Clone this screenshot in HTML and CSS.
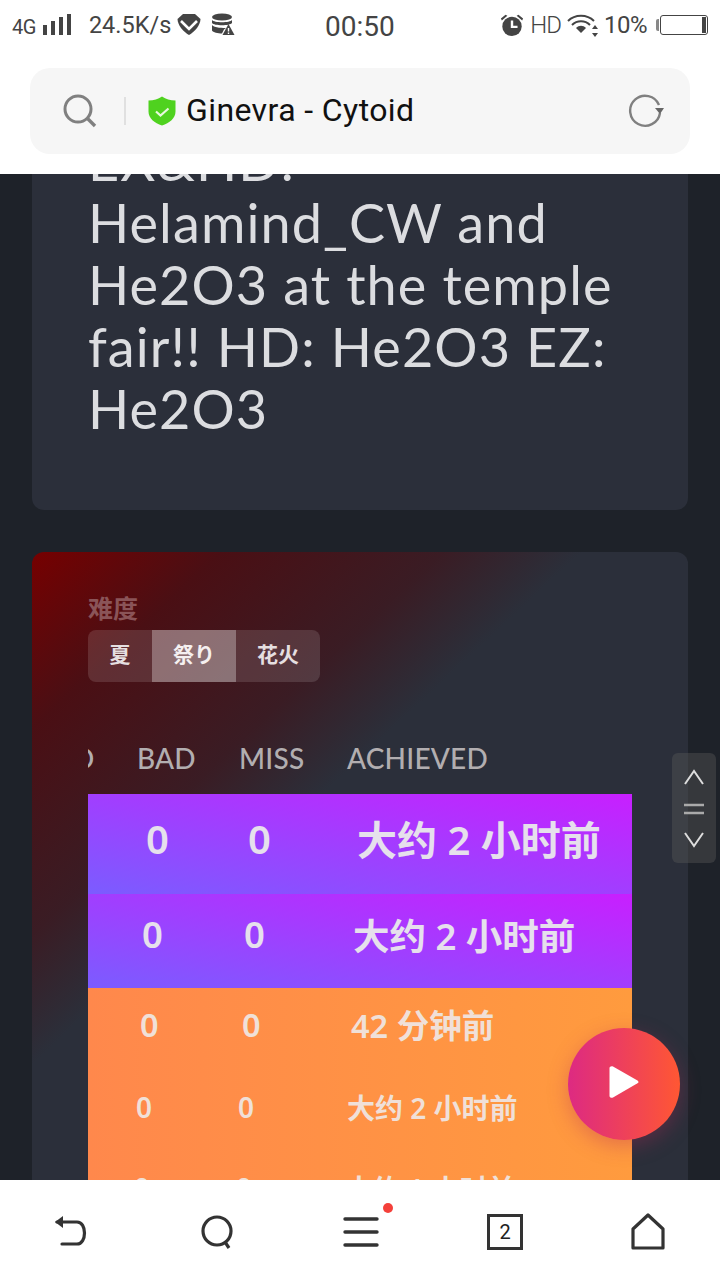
FILE: index.html
```html
<!DOCTYPE html>
<html lang="zh">
<head>
<meta charset="utf-8">
<title>Ginevra - Cytoid</title>
<link rel="stylesheet" href="styles.css">
</head>
<body>
<div class="phone">
  <header class="status">
    <div class="status-left">
      <span class="net">4G</span>
      <svg class="ic-signal" width="30" height="24" viewBox="0 0 30 24"><g fill="#444"><rect x="1" y="12" width="4" height="10"/><rect x="9" y="8" width="4" height="14"/><rect x="17" y="4" width="4" height="18"/><rect x="25" y="1" width="4" height="21"/></g></svg>
      <span class="speed">24.5K/s</span>
      <svg class="ic-vpn" width="24" height="24" viewBox="0 0 24 24"><path d="M6 1h12l5.500 5c0 6-6 13-11.500 16C6.500 19 .5 12 .5 6z" fill="#444"/><path d="M4 8l8 8 8-8" fill="none" stroke="#fff" stroke-width="2.600"/></svg>
      <svg class="ic-db" width="24" height="24" viewBox="0 0 24 24"><g fill="#444"><ellipse cx="11" cy="4" rx="10" ry="3.600"/><path d="M1 7c2 3 18 3 20 0v3c-2 3-18 3-20 0zM1 12c2 3 12 3 14 3l-2 1.500-2 4c-4 0-9-1-10-3z"/><path d="M17.500 11l6 11h-12z"/></g><path d="M17.500 15v3.500M17.500 19.500v1.500" stroke="#fff" stroke-width="1.400"/></svg>
    </div>
    <span class="clock">00:50</span>
    <div class="status-right">
      <svg class="ic-alarm" width="24" height="24" viewBox="0 0 26 26"><g fill="#444"><circle cx="13" cy="14.500" r="10.500"/><path d="M1 6l5-4 2 1-6 5zM25 6l-5-4-2 1 6 5z"/></g><path d="M13 8v7h6" fill="none" stroke="#fff" stroke-width="2.600"/></svg>
      <span class="hd">HD</span>
      <svg class="ic-wifi" width="32" height="24" viewBox="0 0 32 24"><g fill="none" stroke="#444" stroke-width="2"><path d="M1 8c7-7 19-7 26 0"/><path d="M5 12c5-5 13-5 18 0"/></g><path d="M9 15c3-3 7-3 10 0l-5 5z" fill="#444"/><path d="M28 12l3 4h-6zM28 24l3-4h-6z" fill="#444"/></svg>
      <span class="pct">10%</span>
      <span class="batt-cap"></span>
      <span class="batt"><span class="batt-level"></span></span>
    </div>
  </header>

  <div class="addr-wrap">
    <div class="addr">
      <svg class="ic-search" width="34" height="34" viewBox="0 0 34 34"><circle cx="15" cy="15" r="13" fill="none" stroke="#808080" stroke-width="3"/><path d="M24 24l8 8" stroke="#808080" stroke-width="3.400"/></svg>
      <span class="sep"></span>
      <svg class="ic-shield" width="28" height="30" viewBox="0 0 28 30"><path d="M14 .5c4 2.500 8 4 13.500 4v11c0 7-6 11.500-13.500 14C6.500 27 .5 22.500.5 15.500v-11C6 4.500 10 3 14 .5z" fill="#4fd21f"/><path d="M8 15.500l4.500 4 8-7" fill="none" stroke="#e8f9dd" stroke-width="2.200"/></svg>
      <span class="addr-title">Ginevra - Cytoid</span>
      <svg class="ic-reload" width="36" height="34" viewBox="0 0 36 34"><path d="M31 11A15 15 0 1 0 32 19" fill="none" stroke="#808080" stroke-width="2.400"/><path d="M27 14h9l-4 6z" fill="#666"/></svg>
    </div>
  </div>

  <main class="page">
    <section class="card card-desc">
      <p class="desc">EX&amp;HD:<br>Helamind_CW and<br>He2O3 at the temple<br>fair!! HD: He2O3 EZ:<br>He2O3</p>
    </section>

    <section class="card card-rank">
      <div class="label">难度</div>
      <div class="tabs">
        <span class="tab tab-a">夏</span>
        <span class="tab tab-b on">祭り</span>
        <span class="tab tab-b">花火</span>
      </div>
      <div class="thead">
        <span class="th-clip">D</span>
        <span class="th th-bad">BAD</span>
        <span class="th th-miss">MISS</span>
        <span class="th">ACHIEVED</span>
      </div>
      <div class="rows">
        <div class="row purple r1"><span class="n">0</span><span class="n n2">0</span><span class="t">大约 2 小时前</span></div>
        <div class="row purple r2"><span class="n">0</span><span class="n n2">0</span><span class="t">大约 2 小时前</span></div>
        <div class="orange">
          <div class="row r3"><span class="n">0</span><span class="n n2">0</span><span class="t">42 分钟前</span></div>
          <div class="row r4"><span class="n">0</span><span class="n n2">0</span><span class="t">大约 2 小时前</span></div>
          <div class="row r5"><span class="n">0</span><span class="n n2">0</span><span class="t">大约 1 小时前</span></div>
        </div>
      </div>
    </section>

    <div class="scroller">
      <svg width="22" height="18" viewBox="0 0 22 18"><path d="M2 16l9-13 9 13" fill="none" stroke="#ddd" stroke-width="2"/></svg>
      <svg width="22" height="14" viewBox="0 0 22 14"><path d="M1 3h20M1 11h20" stroke="#aaa" stroke-width="2.400"/></svg>
      <svg width="22" height="18" viewBox="0 0 22 18"><path d="M2 2l9 13 9-13" fill="none" stroke="#ddd" stroke-width="2"/></svg>
    </div>
    <div class="fab">
      <svg class="play" width="30" height="34" viewBox="0 0 30 34"><path d="M4 1.500l24.500 14c1.300.8 1.300 2 0 2.800L4 32.500C2.500 33.300.5 32.500.5 31V3C.5 1.500 2.500.7 4 1.500z" fill="#fff"/></svg>
    </div>
  </main>

  <nav class="nav">
    <svg width="40" height="40" viewBox="0 0 40 40"><path d="M5 10h20c10 0 10 22 0 22H10" fill="none" stroke="#333" stroke-width="3.200" stroke-linecap="round"/><path d="M3 10l8-6v12z" fill="#333"/></svg>
    <svg width="40" height="40" viewBox="0 0 40 40"><circle cx="20" cy="19" r="14" fill="none" stroke="#333" stroke-width="3.200"/><path d="M28 30l4 6" stroke="#333" stroke-width="3.200"/></svg>
    <span class="menu">
      <svg width="40" height="40" viewBox="0 0 40 40"><path d="M3 7h32M3 20h32M3 33h32" stroke="#333" stroke-width="3.400" stroke-linecap="round"/></svg>
      <span class="dot"></span>
    </span>
    <span class="tabs-count">2</span>
    <svg width="40" height="40" viewBox="0 0 40 40"><path d="M20 3L35 17v19H5V17z" fill="none" stroke="#333" stroke-width="3.200" stroke-linejoin="round"/></svg>
  </nav>
</div>
</body>
</html>
```

FILE: styles.css
```css
* { box-sizing: border-box; }
html, body { margin: 0; padding: 0; }
body { font-family: "Noto Sans", "Noto Sans CJK SC", sans-serif; background: #fff; }
.phone { width: 720px; height: 1280px; display: flex; flex-direction: column; overflow: hidden; }

/* status bar */
.status { height: 54px; flex: none; display: flex; align-items: center; justify-content: space-between; padding: 0 12px 4px 12px; color: #444; position: relative; background: #fff; }
.status-left, .status-right { display: flex; align-items: center; }
.net { font: 20px "Roboto", sans-serif; letter-spacing: -.5px; margin-top: 3px; }
.ic-signal { margin-left: 6px; margin-right: 17px; }
.speed { font: 23.500px/26px "Roboto", sans-serif; margin-right: 6px; }
.ic-vpn { margin-right: 10px; }
.clock { font: 28px "Roboto", sans-serif; position: absolute; left: 325px; top: 10px; }
.ic-alarm { margin-right: 6px; }
.hd { font: 24px "Roboto", sans-serif; font-weight: 300; letter-spacing: -1px; margin-right: 6px; }
.pct { font: 24px "Roboto", sans-serif; margin: 0 9px 0 5px; letter-spacing: -.5px; }
.batt-cap { width: 3px; height: 12px; background: #888; border-radius: 2px 0 0 2px; margin-right: 1px; }
.batt { width: 48px; height: 20px; border: 1.500px solid #444; border-radius: 3px; display: flex; justify-content: flex-end; padding: 1px; }
.batt-level { width: 4px; background: #444; }

/* address bar */
.addr-wrap { height: 120px; flex: none; background: #fff; padding: 14px 30px 20px; }
.addr { height: 86px; border-radius: 20px; background: #f6f6f6; display: flex; align-items: center; padding: 0 26px 0 33px; }
.ic-search { flex: none; }
.sep { width: 2px; height: 28px; background: #e0e0e0; margin: 0 22px 0 27px; flex: none; }
.ic-shield { flex: none; margin-right: 10px; }
.addr-title { font: 32px "Roboto", sans-serif; color: #111; flex: 1; letter-spacing: .4px; margin-bottom: 2px; }

/* page */
.page { flex: 1; min-height: 0; background: #1e2229; position: relative; overflow: hidden; padding: 0 32px; }
.card { background: #2b2f3a; border-radius: 12px; position: relative; }
.card-desc { margin-top: -70px; height: 406px; padding: 26px 56px 0; }
.desc { margin: 0; color: #dcdde0; font: 54px/62px "Lato", "Noto Sans", sans-serif; letter-spacing: 1.100px; }
.card-rank { margin-top: 42px; height: 760px; padding: 40px 56px 0; overflow: hidden; background: linear-gradient(137deg, #760000 0, #4a0f14 130px, #3a1c24 280px, #2b2f3a 375px); }
.label { color: #8a5458; font-size: 25px; line-height: 30px; font-weight: 700; font-family: "Noto Sans CJK SC", sans-serif; }
.tabs { display: inline-flex; height: 52px; margin-top: 8px; border-radius: 8px; background: rgba(255,255,255,.13); overflow: hidden; }
.tab { display: flex; align-items: center; justify-content: center; color: #e5dfe0; font: 700 21px "Noto Sans CJK JP", sans-serif; padding-bottom: 6px; }
.tab-a { width: 64px; }
.tab-b { width: 84px; }
.tab.on { background: rgba(255,255,255,.3); color: #f5f0f0; }
.thead { display: flex; align-items: center; height: 36px; margin-top: 58px; color: #b2aeb0; font: 500 28px "Lato", "Noto Sans", sans-serif; letter-spacing: .2px; overflow: hidden; }
.th-clip { width: 64px; flex: none; margin-left: -15px; }
.th-bad { width: 102px; flex: none; }
.th-miss { width: 108px; flex: none; }
.rows { margin-top: 18px; }
.row { display: flex; align-items: center; color: #e6e0ec; font-weight: 600; font-family: "Noto Sans", "Noto Sans CJK SC", sans-serif; overflow: hidden; }
.n { flex: none; width: 102px; }
.n2 { width: 109px; }
.purple { background: linear-gradient(to top right, #7b5cff, #c81fff); }
.orange { background: linear-gradient(to right, #ff884c, #ff9b3e); }
.r1 { height: 100px; font-size: 40px; padding: 0 0 12px 58px; }
.r2 { height: 94px; font-size: 36.500px; padding: 0 0 14px 54px; }
.r3 { height: 78px; font-size: 32.500px; padding: 0 0 6px 52px; color: #f0e0d8; }
.r4 { height: 82px; font-size: 28px; padding: 0 0 0 48px; color: #f0e0d8; }
.r5 { height: 80px; font-size: 28px; padding: 0 0 0 46px; color: #f0e0d8; }

/* overlays */
.scroller { position: absolute; left: 672px; top: 579px; width: 44px; height: 110px; border-radius: 6px; background: rgba(90,90,90,.4); display: flex; flex-direction: column; align-items: center; justify-content: space-between; padding: 15px 0 14px; }
.fab { position: absolute; left: 568px; top: 854px; width: 112px; height: 112px; border-radius: 50%; background: linear-gradient(to right, #dd2a82, #ff5733); box-shadow: 0 6px 20px rgba(180,40,90,.35); display: flex; align-items: center; justify-content: center; }
.play { margin: 0 0 4px 0; }

/* nav */
.nav { height: 100px; flex: none; background: #fff; display: flex; align-items: center; justify-content: space-between; padding: 4px 52px 0; }
.menu { position: relative; width: 40px; height: 40px; display: block; }
.menu svg { display: block; }
.dot { position: absolute; left: 41px; top: -9px; width: 10px; height: 10px; border-radius: 50%; background: #f4403a; }
.tabs-count { width: 36px; height: 36px; border: 3px solid #333; display: flex; align-items: center; justify-content: center; font: 20px "Roboto", sans-serif; color: #222; }
```
